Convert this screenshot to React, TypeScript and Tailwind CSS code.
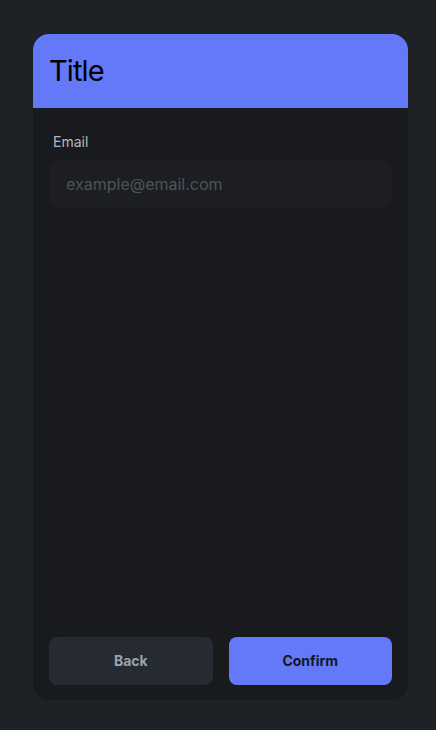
export default function App() {
  return (
    <div
      className="min-h-screen w-full bg-[#1e2226] pt-[34px]"
      style={{ fontFamily: "Inter, 'Noto Sans', sans-serif" }}
    >
      <div className="ml-[33px] flex h-[666px] w-[375px] flex-col overflow-hidden rounded-[16px] bg-[#181a1e]">
        <div className="flex h-[74px] items-center bg-[#6479f8] px-4">
          <h1 className="text-[29px] leading-9 tracking-[-0.03em] text-black">Title</h1>
        </div>
        <div className="flex flex-1 flex-col px-4 pb-[15px] pt-6">
          <label className="mb-2 block pl-1 text-sm leading-5 text-[#b4b8c0]">Email</label>
          <input
            type="email"
            placeholder="example@email.com"
            className="h-12 w-full rounded-lg bg-[#1c1e22] px-[17px] text-base text-gray-300 outline-none placeholder:text-[#4e535b]"
          />
          <div className="flex-1" />
          <div className="flex gap-4">
            <button className="h-12 flex-1 rounded-lg bg-[#252a33] text-sm font-bold text-[#9ca3af]">
              Back
            </button>
            <button className="h-12 flex-1 rounded-lg bg-[#6479f8] text-sm font-bold text-[#111827]">
              Confirm
            </button>
          </div>
        </div>
      </div>
    </div>
  );
}
